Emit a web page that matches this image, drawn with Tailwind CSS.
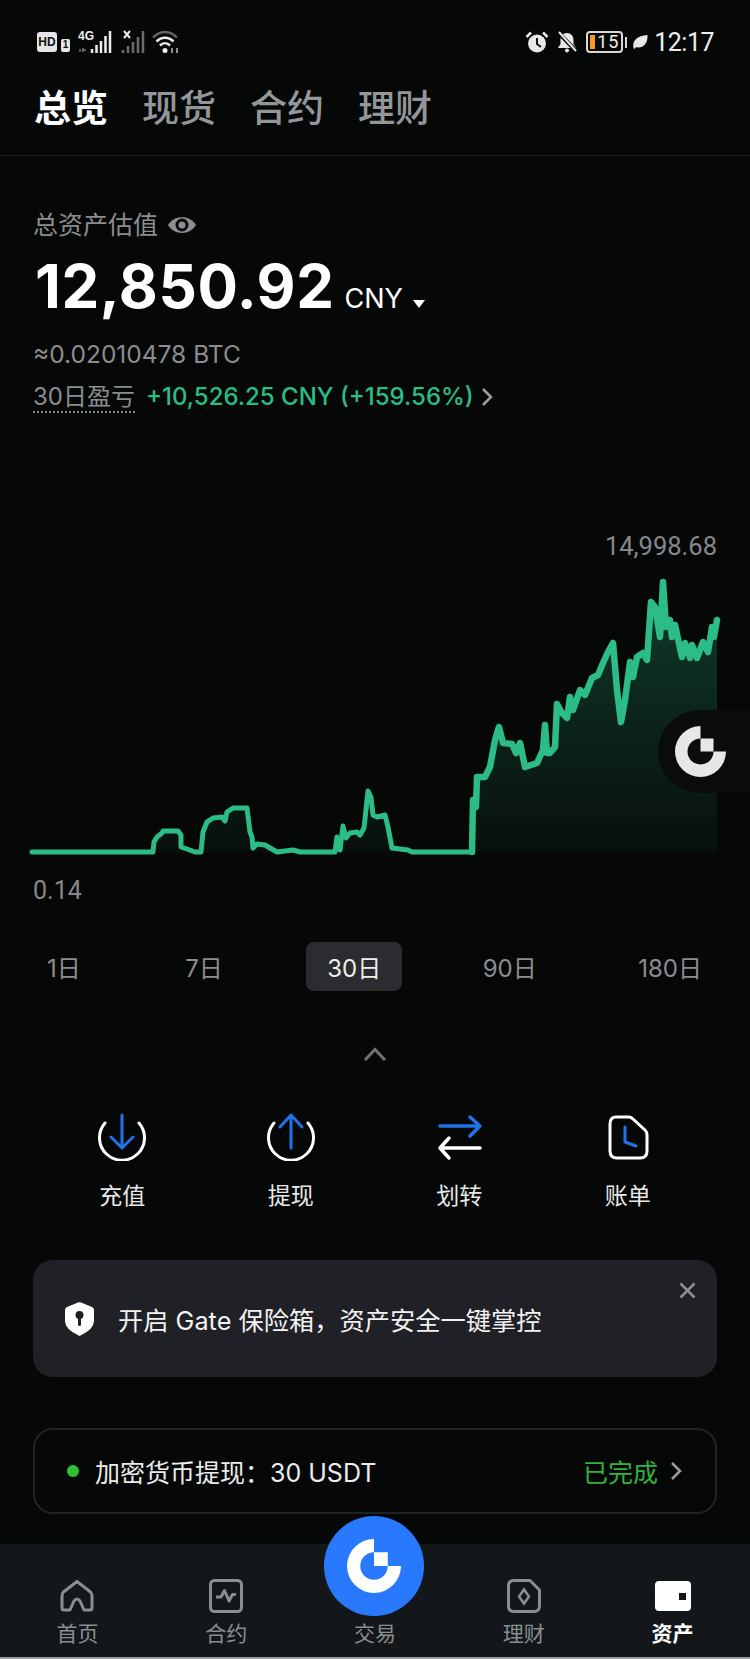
<!DOCTYPE html>
<html lang="zh-CN">
<head>
    <meta charset="UTF-8">
    <meta name="viewport" content="width=device-width, initial-scale=1.0">
    <title>资产总览</title>
    <script src="https://cdn.jsdelivr.net/npm/@tailwindcss/browser@4"></script>
</head>
<body class="bg-[#060808] font-['Inter','Noto_Sans_CJK_SC',sans-serif]">
<div class="relative w-[750px] h-[1659px] overflow-hidden bg-[#060808] text-white">

    <!-- Status bar -->
    <div class="flex justify-between items-center h-[84px] pl-[37px] pr-[36px]">
        <div class="flex items-center h-[24px]">
            <span class="flex items-center justify-center w-[20px] h-[20px] rounded-[3px] bg-[#e6e6e6] text-[#111] text-[12px] font-bold leading-none font-['Liberation_Sans']">HD</span>
            <span class="flex items-center justify-center ml-[4px] mt-[6px] w-[9px] h-[13px] rounded-[2px] bg-[#e6e6e6] text-[#111] text-[10px] font-bold leading-none font-['Liberation_Sans']">1</span>
            <svg class="ml-[8px]" width="38" height="24" viewBox="0 0 38 24">
                <text x="0" y="10" fill="#eee" font-size="12" font-weight="700" font-family="Liberation Sans">4G</text>
                <path d="M2 19v3M5 18v4M8 20h-3" stroke="#777" stroke-width="1.5" fill="none"/>
                <path d="M14 19v4M18.500 15v8M23 11v12M27.500 6v17M32 1v22" stroke="#eee" stroke-width="2.500" fill="none"/>
            </svg>
            <svg class="ml-[5px]" width="26" height="24" viewBox="0 0 26 24">
                <path d="M3 1l6 7M9 1l-6 7" stroke="#eee" stroke-width="2" fill="none"/>
                <path d="M2 20v3M7 16v7M12 12v11M17 7v16M22 1v22" stroke="#6c6c6c" stroke-width="2.500" fill="none"/>
            </svg>
            <svg class="ml-[5px]" width="28" height="24" viewBox="0 0 28 24" fill="none">
                <path d="M1 7.500C8 0 18 0 25 7.500" stroke="#666" stroke-width="2.500"/>
                <path d="M4.500 11.500C9.500 6.500 16.500 6.500 21.500 11.500" stroke="#eee" stroke-width="2.500"/>
                <path d="M8 15.500C11 12.500 15 12.500 18 15.500" stroke="#eee" stroke-width="2.500"/>
                <circle cx="13" cy="20.500" r="2.500" fill="#eee"/>
                <path d="M20 18v5M25 18v5" stroke="#bbb" stroke-width="1.500"/>
            </svg>
        </div>
        <div class="flex items-center h-[24px]">
            <svg width="24" height="22" viewBox="0 0 24 22" fill="none">
                <circle cx="12" cy="12.500" r="9" fill="#e8e8e8"/>
                <path d="M12 7v6l4 3" stroke="#111" stroke-width="2"/>
                <path d="M1.500 6L6 1.500M22.500 6L18 1.500" stroke="#e8e8e8" stroke-width="2.500"/>
            </svg>
            <svg class="ml-[7px]" width="22" height="22" viewBox="0 0 22 22" fill="none">
                <path d="M11 2c4 0 6.500 3 6.500 7v4l2.500 4H2l2.500-4V9C4.500 5 7 2 11 2z" fill="#e8e8e8"/>
                <circle cx="11" cy="19.500" r="2" fill="#e8e8e8"/>
                <path d="M2 1l18 19" stroke="#060808" stroke-width="4"/>
                <path d="M3 1l17 19" stroke="#e8e8e8" stroke-width="2"/>
            </svg>
            <div class="flex items-center ml-[8px] w-[37px] h-[22px] rounded-[4px] border-2 border-[#d8d8d8] pl-[2px]">
                <span class="w-[5px] h-[14px] bg-[#f59a23]"></span>
                <span class="ml-[2px] text-[18px] leading-none text-[#eee] font-['Roboto'] tracking-[1px]">15</span>
            </div>
            <span class="ml-[2px] w-[2px] h-[11px] bg-[#d8d8d8]"></span>
            <svg class="ml-[5px]" width="16" height="16" viewBox="0 0 16 16">
                <path d="M1.500 14C0 7 5 1.500 15.500 1c.500 9-5 14-11.500 12L9 6.500 2.500 15z" fill="#e8e8e8"/>
            </svg>
            <span class="ml-[6px] text-[25px] leading-none tracking-[-0.5px] text-[#eee] font-['Roboto']">12:17</span>
        </div>
    </div>

    <!-- Tabs -->
    <div class="flex gap-[34px] h-[72px] pl-[34px] pt-[1px] border-b border-[#17191b] text-[37px] leading-[48px] font-medium text-[#94979a]">
        <span class="text-white font-semibold">总览</span>
        <span>现货</span>
        <span>合约</span>
        <span>理财</span>
    </div>

    <!-- Summary -->
    <div class="pl-[33px] pt-[53px]">
        <div class="flex items-center text-[25px] leading-[32px] text-[#8a8d90]">
            <span>总资产估值</span>
            <svg class="ml-[10px]" width="28" height="18" viewBox="0 0 28 18">
                <path d="M0 9C6 -1.500 22 -1.500 28 9C22 19.500 6 19.500 0 9z" fill="#8c8f92"/>
                <circle cx="14" cy="9" r="6.500" fill="#060808"/>
                <circle cx="14" cy="9" r="3.500" fill="#8c8f92"/>
            </svg>
        </div>
        <div class="flex items-baseline h-[60px] mt-[15px] pl-[2px] leading-[60px]">
            <span class="text-[60px] font-bold tracking-[0.6px]">12,850.92</span>
            <span class="ml-[10px] text-[27px]">CNY</span>
            <svg class="ml-[10px] mb-[3px]" width="12" height="8" viewBox="0 0 12 8"><path d="M0 0h12L6 8z" fill="#fff"/></svg>
        </div>
        <div class="mt-[22px] text-[24.5px] leading-[32px] text-[#8a8d90]">≈0.02010478 BTC</div>
        <div class="flex items-center mt-[11px] text-[24px] leading-[32px]">
            <span class="h-[32px] border-b-2 border-dotted border-[#85888b] text-[#8a8d90]">30日盈亏</span>
            <span class="ml-[11px] text-[#2bbd85] font-medium">+10,526.25 CNY (+159.56%)</span>
            <svg class="ml-[7px]" width="12" height="20" viewBox="0 0 12 20" fill="none"><path d="M2 2l8 8-8 8" stroke="#9a9da0" stroke-width="2.500"/></svg>
        </div>
    </div>

    <!-- Chart -->
    <div class="relative mt-[117px]">
        <div class="pr-[33px] text-right text-[25.5px] leading-[32px] text-[#85888b] font-['Roboto']">14,998.68</div>
        <svg class="block" width="750" height="313" viewBox="0 562 750 313" fill="none">
            <defs>
                <linearGradient id="chartFill" gradientUnits="userSpaceOnUse" x1="0" y1="582" x2="0" y2="852">
                    <stop offset="0" stop-color="#2bbd85" stop-opacity="0.28"/>
                    <stop offset="1" stop-color="#2bbd85" stop-opacity="0.04"/>
                </linearGradient>
            </defs>
            <path fill="url(#chartFill)" d="M32 852L153 852 154 842 157 837 162 833 163 831 178 831 181 835 181 847 187 849 195 852 201 852 203 832 207 822 213 818 222 817 225 821 227 812 233 808 247 808 250 832 252 837 253 848 257 844 265 845 277 852 293 850 300 852 335 852 337 837 340 850 343 826 346 838 350 833 357 832 360 835 364 828 368 791 371 797 373 815 377 817 385 815 388 827 392 848 408 850 412 852 472 852 473 800 476 807 477 777 485 777 490 767 495 740 499 727 503 743 512 744 516 753 520 743 525 767 537 763 543 750 545 725 547 753 550 753 555 747 557 704 562 713 567 718 570 697 573 710 580 690 585 695 592 678 598 675 603 663 608 652 613 643 617 690 621 722 625 700 630 662 633 677 637 657 643 653 647 660 651 602 655 607 660 637 663 582 666 627 670 620 672 637 675 625 682 657 685 643 690 658 692 645 697 658 703 642 708 652 712 627 714 637 717 620 717 852Z"/>
            <path stroke="#2bbd85" stroke-width="5" stroke-linejoin="round" stroke-linecap="round" d="M32 852L153 852 154 842 157 837 162 833 163 831 178 831 181 835 181 847 187 849 195 852 201 852 203 832 207 822 213 818 222 817 225 821 227 812 233 808 247 808 250 832 252 837 253 848 257 844 265 845 277 852 293 850 300 852 335 852 337 837 340 850 343 826 346 838 350 833 357 832 360 835 364 828 368 791 371 797 373 815 377 817 385 815 388 827 392 848 408 850 412 852 472 852"/>
            <path stroke="#2bbd85" stroke-width="6.500" stroke-linejoin="round" stroke-linecap="round" d="M472 852L473 800 476 807 477 777 485 777 490 767 495 740 499 727 503 743 512 744 516 753 520 743 525 767 537 763 543 750 545 725 547 753 550 753 555 747 557 704 562 713 567 718 570 697 573 710 580 690 585 695 592 678 598 675 603 663 608 652 613 643 617 690 621 722 625 700 630 662 633 677 637 657 643 653 647 660 651 602 655 607 660 637 663 582 666 627 670 620 672 637 675 625 682 657 685 643 690 658 692 645 697 658 703 642 708 652 712 627 714 637 717 620"/>
        </svg>
        <div class="pl-[33px] text-[25px] leading-[32px] text-[#85888b] font-['Roboto']">0.14</div>

        <!-- Floating logo on the chart edge -->
        <div class="absolute left-[658px] top-[180px] flex items-center w-[92px] h-[83px] pl-[17px] rounded-l-[42px] bg-[#090c0b]">
            <svg width="51" height="51" viewBox="0 0 51 51" fill="#e6e7e7">
                <path d="M25.500 0A25.500 25.500 0 1 0 51 25.500H38.500A13 13 0 1 1 25.500 12.500Z"/>
                <rect x="25.500" y="12.500" width="13" height="13"/>
            </svg>
        </div>
    </div>

    <!-- Range selector -->
    <div class="flex justify-between mt-[35px] pl-[26px] pr-[27px] text-[24px] text-[#8a8d90]">
        <span class="flex items-center h-[49px] px-[21px] pt-[5px]">1日</span>
        <span class="flex items-center h-[49px] ml-[3px] px-[21px] pt-[5px]">7日</span>
        <span class="flex items-center h-[49px] ml-[3px] px-[21px] pt-[5px] rounded-[8px] bg-[#2a2c30] text-[#eee]">30日</span>
        <span class="flex items-center h-[49px] px-[21px] pt-[5px]">90日</span>
        <span class="flex items-center h-[49px] px-[21px] pt-[5px]">180日</span>
    </div>

    <div class="flex justify-center mt-[56px]">
        <svg width="24" height="14" viewBox="0 0 24 14" fill="none"><path d="M2 13L12 2.500 22 13" stroke="#6f7174" stroke-width="3"/></svg>
    </div>

    <!-- Actions -->
    <div class="grid grid-cols-4 mt-[52px] px-[38px] text-[23px] leading-[30px] text-[#e8e8e8]">
        <div class="flex flex-col items-center gap-[20px]">
            <svg width="48" height="48" viewBox="0 0 48 48" fill="none" stroke-width="3">
                <path d="M7 10A22.500 22.500 0 1 0 41 10" stroke="#fff" stroke-linecap="round"/>
                <path d="M24 2V35M13 24L24 35 35 24" stroke="#1f72e8" stroke-linecap="round" stroke-linejoin="round"/>
            </svg>
            <span>充值</span>
        </div>
        <div class="flex flex-col items-center gap-[20px]">
            <svg width="48" height="48" viewBox="0 0 48 48" fill="none" stroke-width="3">
                <path d="M7 10A22.500 22.500 0 1 0 41 10" stroke="#fff" stroke-linecap="round"/>
                <path d="M24 35V2M13 14L24 2 35 14" stroke="#1f72e8" stroke-linecap="round" stroke-linejoin="round"/>
            </svg>
            <span>提现</span>
        </div>
        <div class="flex flex-col items-center gap-[20px]">
            <svg width="48" height="48" viewBox="0 0 48 48" fill="none" stroke-width="3.500" stroke-linecap="round" stroke-linejoin="round">
                <path d="M5 13H45M35 4L45 13 35 23" stroke="#1f72e8"/>
                <path d="M45 35H5M14 25L5 35 14 45" stroke="#fff"/>
            </svg>
            <span>划转</span>
        </div>
        <div class="flex flex-col items-center gap-[20px]">
            <svg width="48" height="48" viewBox="0 0 48 48" fill="none" stroke-width="3">
                <path d="M12 4H25Q27 4 29 6L41 17Q43 19 43 22V38Q43 45 36 45H13Q6 45 6 38V11Q6 4 12 4Z" stroke="#fff"/>
                <path d="M21 14V29L32 33" stroke="#1f72e8" stroke-linecap="round" stroke-linejoin="round"/>
            </svg>
            <span>账单</span>
        </div>
    </div>

    <!-- Vault banner -->
    <div class="relative flex items-center h-[117px] mt-[49px] mx-[33px] pl-[32px] rounded-[20px] bg-[#1f2126]">
        <svg width="29" height="34" viewBox="0 0 29 34">
            <path d="M13 .500Q14.500 0 16 .500L27 5Q29 6 29 8V19Q29 27 15.500 33.500Q14.500 34 13.500 33.500Q0 27 0 19V8Q0 6 2 5Z" fill="#fff"/>
            <circle cx="14.500" cy="13" r="4" fill="#1f2126"/>
            <rect x="13" y="13" width="3" height="11" rx="1.500" fill="#1f2126"/>
        </svg>
        <span class="ml-[24px] mt-[6px] text-[25.25px] text-[#f2f2f2]">开启 Gate 保险箱，资产安全一键掌控</span>
        <svg class="absolute right-[21px] top-[22px]" width="17" height="17" viewBox="0 0 17 17" fill="none">
            <path d="M1.500 1.500L15.500 15.500M15.500 1.500L1.500 15.500" stroke="#8c8f93" stroke-width="2.500"/>
        </svg>
    </div>

    <!-- Withdraw status -->
    <div class="flex items-center h-[86px] mt-[51px] mx-[33px] pl-[32px] pr-[33px] rounded-[20px] border-2 border-[#1f2226] text-[25px]">
        <span class="w-[12px] h-[12px] rounded-full bg-[#2fc033]"></span>
        <span class="ml-[16px] mt-[6px] text-[#ececec]">加密货币提现：30 USDT</span>
        <span class="ml-auto mt-[6px] text-[#33b33c]">已完成</span>
        <svg class="ml-[12px]" width="12" height="20" viewBox="0 0 12 20" fill="none"><path d="M2 2l8 8-8 8" stroke="#9a9da0" stroke-width="2.500"/></svg>
    </div>

    <!-- Bottom nav -->
    <div class="absolute left-0 right-0 bottom-0 grid grid-cols-5 h-[115px] px-[3px] pt-[35px] border-b-2 border-[#9a9da0] bg-[#14171a] text-[21px] leading-[28px] text-[#8b8e91]">
        <div class="flex flex-col items-center gap-[7px]">
            <svg width="34" height="34" viewBox="0 0 34 34" fill="none">
                <path d="M17 2.500L3.500 13Q2 14.500 2 17V29Q2 31 4 31H10L14 22Q17 18 20 22L24 31H30Q32 31 32 29V17Q32 14.500 30.500 13Z" stroke="#8b8e91" stroke-width="3" stroke-linejoin="round"/>
            </svg>
            <span>首页</span>
        </div>
        <div class="flex flex-col items-center gap-[7px]">
            <svg width="34" height="34" viewBox="0 0 34 34" fill="none" stroke="#8b8e91">
                <rect x="1.500" y="1.500" width="31" height="31" rx="4" stroke-width="3"/>
                <path d="M7 18H12L15.500 11.500 20 22 23.500 15.500H27" stroke-width="3" stroke-linejoin="round"/>
            </svg>
            <span>合约</span>
        </div>
        <div class="flex flex-col items-center gap-[7px]">
            <div class="h-[34px]"></div>
            <span>交易</span>
        </div>
        <div class="flex flex-col items-center gap-[7px]">
            <svg width="34" height="34" viewBox="0 0 34 34" fill="none" stroke="#8b8e91">
                <path d="M7 1.500H23L32.500 11V27Q32.500 32.500 27 32.500H7Q1.500 32.500 1.500 27V7Q1.500 1.500 7 1.500Z" stroke-width="3" stroke-linejoin="round"/>
                <path d="M17 10.500L22 17.500 17 24.500 12 17.500Z" stroke-width="2.500"/>
            </svg>
            <span>理财</span>
        </div>
        <div class="flex flex-col items-center gap-[7px] text-white font-semibold">
            <svg width="36" height="34" viewBox="0 0 36 34">
                <rect x="0" y="2" width="36" height="30" rx="4" fill="#fff"/>
                <rect x="24" y="14" width="7" height="7" fill="#14171a"/>
            </svg>
            <span>资产</span>
        </div>
    </div>

    <!-- Trade button sits over the nav -->
    <div class="absolute left-[324px] top-[1516px] flex items-center justify-center w-[100px] h-[100px] rounded-full bg-[#2979ff]">
        <svg width="54" height="54" viewBox="0 0 51 51" fill="#fff">
            <path d="M25.500 0A25.500 25.500 0 1 0 51 25.500H38.500A13 13 0 1 1 25.500 12.500Z"/>
            <rect x="25.500" y="12.500" width="13" height="13"/>
        </svg>
    </div>
</div>
</body>
</html>
